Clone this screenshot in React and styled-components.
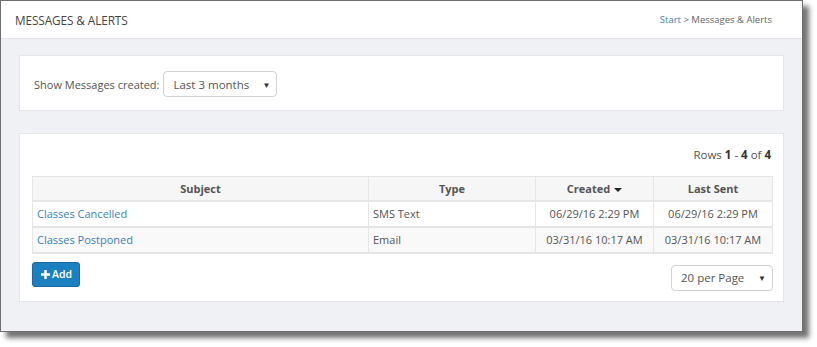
import React from "react";
import styled, { createGlobalStyle } from "styled-components";

const Global = createGlobalStyle`
  html, body { margin: 0; padding: 0; background: #ffffff; }
  body { font-family: "Open Sans", "Liberation Sans", sans-serif; color: #555; }
  * { box-sizing: border-box; }
`;

const Stage = styled.div`
  width: 817px;
  height: 347px;
  background: #fff;
`;

const Window = styled.div`
  width: 803px;
  height: 332px;
  border: 1px solid #6f6f6f;
  background: #eff1f5;
  box-shadow: 6px 6px 5px rgba(0, 0, 0, 0.55);
  display: flex;
  flex-direction: column;
`;

const Header = styled.div`
  height: 38px;
  flex: none;
  background: #fff;
  border-bottom: 1px solid #e1e4ea;
  display: flex;
  align-items: center;
  justify-content: space-between;
  padding: 0 30px 0 14px;
`;

const Title = styled.h1`
  margin: 0;
  font-size: 11.8px;
  font-weight: 400;
  color: #444;
  letter-spacing: -0.1px;
`;

const Crumbs = styled.div`
  font-size: 9.5px;
  color: #666;
`;

const CrumbLink = styled.a`
  color: #3a7fc1;
  text-decoration: none;
`;

const Content = styled.div`
  padding: 16px 18px;
  display: flex;
  flex-direction: column;
  gap: 22px;
`;

const Panel = styled.div`
  background: #fff;
  border: 1px solid #e4e6ea;
  padding: ${(p) => p.$pad};
`;

const FilterRow = styled.div`
  display: flex;
  align-items: center;
  gap: 4px;
  font-size: 11px;
  color: #555;
`;

const Select = styled.div`
  width: ${(p) => p.$w}px;
  height: 26px;
  border: 1px solid #cfd3d8;
  border-radius: 4px;
  display: flex;
  align-items: center;
  justify-content: space-between;
  padding: 0 6px 0 9px;
  font-size: 11.5px;
  color: #555;
  background: #fff;
`;

const Caret = styled.span`
  font-size: 8px;
  color: #333;
`;

const RowsInfo = styled.div`
  text-align: right;
  font-size: 11.5px;
  color: #555;
  padding-right: 2px;
  height: 30px;
  line-height: 18px;
  b { font-weight: 700; color: #333; }
`;

const Table = styled.table`
  width: 100%;
  border-collapse: collapse;
  font-size: 11px;
  border: 1px solid #e6e6e6;
`;

const Th = styled.th`
  height: 24px;
  background: #f6f6f6;
  font-weight: 700;
  color: #555;
  text-align: center;
  border: 1px solid #e6e6e6;
  border-bottom: 2px solid #e6e6e6;
  width: ${(p) => p.$w || "auto"};
  padding: 0 4px;
`;

const Tr = styled.tr`
  background: ${(p) => (p.$alt ? "#f9f9f9" : "#fff")};
`;

const Td = styled.td`
  height: 26px;
  border: 1px solid #e6e6e6;
  border-bottom: 2px solid #e6e6e6;
  padding: 0 4px;
  text-align: ${(p) => (p.$center ? "center" : "left")};
  color: #555;
`;

const Link = styled.a`
  color: #3a7fc1;
  text-decoration: none;
`;

const SortCaret = styled.span`
  display: inline-block;
  width: 0;
  height: 0;
  margin-left: 4px;
  vertical-align: middle;
  border-left: 4px solid transparent;
  border-right: 4px solid transparent;
  border-top: 4px solid #222;
`;

const Footer = styled.div`
  display: flex;
  justify-content: space-between;
  align-items: flex-start;
  margin-top: 8px;
`;

const AddButton = styled.button`
  height: 25px;
  padding: 0 7px 0 8px;
  background: #1c7fc0;
  border: 1px solid #176aa3;
  border-radius: 3px;
  color: #fff;
  font-family: "Open Sans", "Liberation Sans", sans-serif;
  font-size: 10.5px;
  font-weight: 600;
  display: flex;
  align-items: center;
  gap: 2px;
`;

const PageSelect = styled(Select)`
  margin-top: 3px;
`;

export default function App() {
  return (
    <Stage>
      <Global />
      <Window>
        <Header>
          <Title>MESSAGES &amp; ALERTS</Title>
          <Crumbs>
            <CrumbLink href="#">Start</CrumbLink> &gt; Messages &amp; Alerts
          </Crumbs>
        </Header>
        <Content>
          <Panel $pad="15px 14px 13px">
            <FilterRow>
              Show Messages created:
              <Select $w={114}>
                Last 3 months <Caret>▼</Caret>
              </Select>
            </FilterRow>
          </Panel>
          <Panel $pad="12px 10px 10px 12px">
            <RowsInfo>
              Rows <b>1</b> - <b>4</b> of <b>4</b>
            </RowsInfo>
            <Table>
              <thead>
                <tr>
                  <Th $w="336px">Subject</Th>
                  <Th $w="167px">Type</Th>
                  <Th $w="118px">
                    Created<SortCaret />
                  </Th>
                  <Th>Last Sent</Th>
                </tr>
              </thead>
              <tbody>
                <Tr>
                  <Td><Link href="#">Classes Cancelled</Link></Td>
                  <Td>SMS Text</Td>
                  <Td $center>06/29/16 2:29 PM</Td>
                  <Td $center>06/29/16 2:29 PM</Td>
                </Tr>
                <Tr $alt>
                  <Td><Link href="#">Classes Postponed</Link></Td>
                  <Td>Email</Td>
                  <Td $center>03/31/16 10:17 AM</Td>
                  <Td $center>03/31/16 10:17 AM</Td>
                </Tr>
              </tbody>
            </Table>
            <Footer>
              <AddButton>
                <svg width="9" height="9" viewBox="0 0 10 10">
                  <path d="M3.6 0h2.8v3.6H10v2.8H6.4V10H3.6V6.4H0V3.6h3.6z" fill="#fff" />
                </svg>
                Add
              </AddButton>
              <PageSelect $w={102}>
                20 per Page <Caret>▼</Caret>
              </PageSelect>
            </Footer>
          </Panel>
        </Content>
      </Window>
    </Stage>
  );
}
